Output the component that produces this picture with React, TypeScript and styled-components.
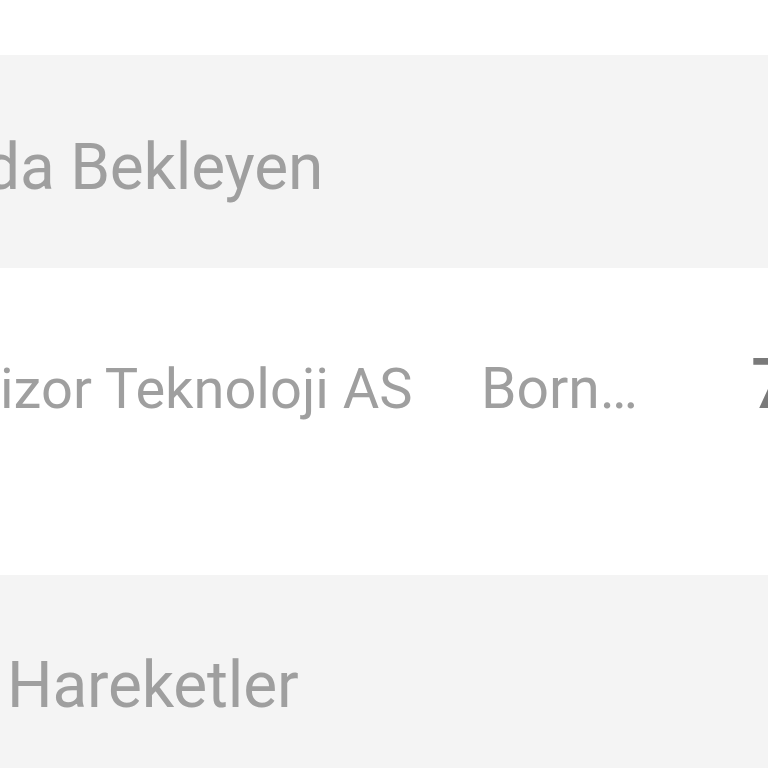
import React from "react";
import styled, { createGlobalStyle } from "styled-components";

const Global = createGlobalStyle`
  html, body {
    margin: 0;
    padding: 0;
    background: #ffffff;
    overflow: hidden;
    width: 768px;
    height: 768px;
  }
  body {
    font-family: Roboto, "Noto Sans", "Liberation Sans", sans-serif;
  }
`;

const Page = styled.div`
  display: flex;
  flex-direction: column;
  width: 768px;
  height: 768px;
  overflow: hidden;
`;

const TopSpace = styled.div`
  height: 55px;
  background: #ffffff;
  flex: none;
`;

const SectionHeader = styled.div<{ $pt: number; $h: number }>`
  flex: none;
  box-sizing: border-box;
  height: ${(p) => p.$h}px;
  padding-top: ${(p) => p.$pt}px;
  background: #f4f4f4;
  white-space: nowrap;
  overflow: hidden;
`;

const HeaderText = styled.span<{ $offset: number }>`
  display: block;
  margin-left: ${(p) => p.$offset}px;
  font-size: 64px;
  line-height: 64px;
  letter-spacing: -0.2px;
  color: #9f9f9f;
  font-weight: 400;
`;

const Row = styled.div`
  flex: none;
  box-sizing: border-box;
  height: 307px;
  padding-top: 88px;
  background: #ffffff;
  display: flex;
  align-items: baseline;
  white-space: nowrap;
  width: 900px;
`;

const Name = styled.span`
  flex: none;
  width: 481px;
  margin-left: 0;
  font-size: 56px;
  line-height: 57px;
  color: #9f9f9f;
`;

const Company = styled.span`
  flex: none;
  width: 270px;
  font-size: 57px;
  line-height: 57px;
  color: #9f9f9f;
`;

const Amount = styled.span`
  flex: none;
  font-size: 70px;
  line-height: 57px;
  font-weight: 500;
  color: #7a7a7a;
`;

export default function App() {
  return (
    <>
      <Global />
      <Page>
        <TopSpace />
        <SectionHeader $pt={81} $h={213}>
          <HeaderText $offset={-16}>da Bekleyen</HeaderText>
        </SectionHeader>
        <Row>
          <Name>izor Teknoloji AS</Name>
          <Company>Born…</Company>
          <Amount>7</Amount>
        </Row>
        <SectionHeader $pt={79} $h={200}>
          <HeaderText $offset={7}>Hareketler</HeaderText>
        </SectionHeader>
      </Page>
    </>
  );
}
